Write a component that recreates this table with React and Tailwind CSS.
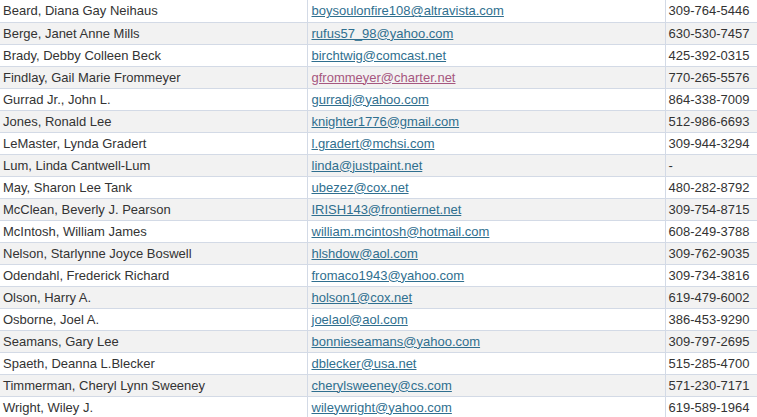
const people = [
  ['Beard, Diana Gay Neihaus', 'boysoulonfire108@altravista.com', '309-764-5446'],
  ['Berge, Janet Anne Mills', 'rufus57_98@yahoo.com', '630-530-7457'],
  ['Brady, Debby Colleen Beck', 'birchtwig@comcast.net', '425-392-0315'],
  ['Findlay, Gail Marie Frommeyer', 'gfrommeyer@charter.net', '770-265-5576', true],
  ['Gurrad Jr., John L.', 'gurradj@yahoo.com', '864-338-7009'],
  ['Jones, Ronald Lee', 'knighter1776@gmail.com', '512-986-6693'],
  ['LeMaster, Lynda Gradert', 'l.gradert@mchsi.com', '309-944-3294'],
  ['Lum, Linda Cantwell-Lum', 'linda@justpaint.net', '-'],
  ['May, Sharon Lee Tank', 'ubezez@cox.net', '480-282-8792'],
  ['McClean, Beverly J. Pearson', 'IRISH143@frontiernet.net', '309-754-8715'],
  ['McIntosh, William James', 'william.mcintosh@hotmail.com', '608-249-3788'],
  ['Nelson, Starlynne Joyce Boswell', 'hlshdow@aol.com', '309-762-9035'],
  ['Odendahl, Frederick Richard', 'fromaco1943@yahoo.com', '309-734-3816'],
  ['Olson, Harry A.', 'holson1@cox.net', '619-479-6002'],
  ['Osborne, Joel A.', 'joelaol@aol.com', '386-453-9290'],
  ['Seamans, Gary Lee', 'bonnieseamans@yahoo.com', '309-797-2695'],
  ['Spaeth, Deanna L.Blecker', 'dblecker@usa.net', '515-285-4700'],
  ['Timmerman, Cheryl Lynn Sweeney', 'cherylsweeney@cs.com', '571-230-7171'],
  ['Wright, Wiley J.', 'wileywright@yahoo.com', '619-589-1964'],
];

export default function App() {
  return (
    <div className="w-[757px] h-[417px] overflow-hidden bg-white font-['Liberation_Sans',Arial,sans-serif] text-[13px] text-[#333]">
      <table className="table-fixed border-collapse w-[757px]">
        <colgroup>
          <col className="w-[307px]" />
          <col className="w-[358px]" />
          <col className="w-[92px]" />
        </colgroup>
        <tbody>
          {people.map(([name, email, phone, visited], i) => (
            <tr key={i} className={i % 2 ? 'bg-[#f2f2f2]' : 'bg-white'}>
              <td className="h-[22px] p-0 pl-[3px] leading-[21px] border-b border-[#d3dae6] whitespace-nowrap">
                {name}
              </td>
              <td className="h-[22px] p-0 pl-[4px] leading-[21px] border-b border-l border-[#d3dae6] whitespace-nowrap">
                <a
                  href="#"
                  className={`underline ${visited ? 'text-[#a6577f]' : 'text-[#2f6f8f]'}`}
                >
                  {email}
                </a>
              </td>
              <td className="h-[22px] p-0 pl-[3px] leading-[21px] border-b border-l border-[#d3dae6] whitespace-nowrap">
                {phone}
              </td>
            </tr>
          ))}
        </tbody>
      </table>
    </div>
  );
}
